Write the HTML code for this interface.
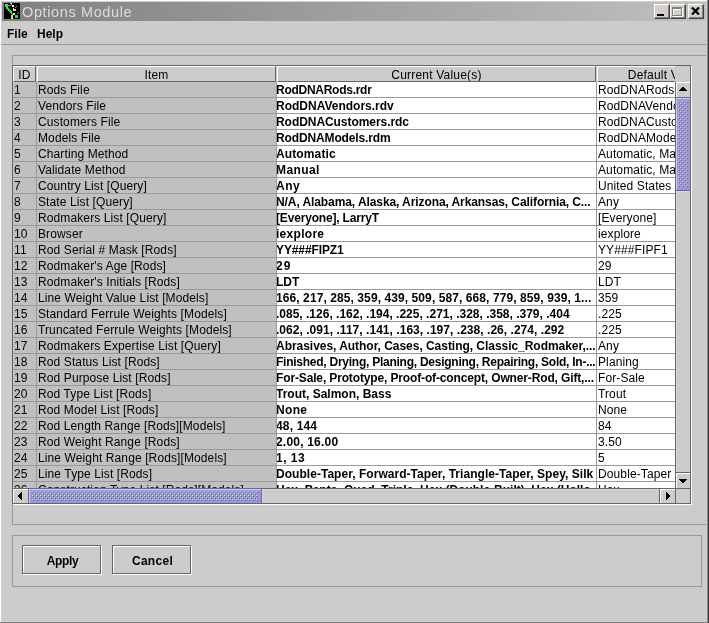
<!DOCTYPE html>
<html><head><meta charset="utf-8">
<style>
*{box-sizing:border-box;margin:0;padding:0}
html,body{width:709px;height:623px;overflow:hidden;background:#cccccc;font-family:"Liberation Sans",sans-serif;font-size:12px;color:#000}
.a{position:absolute}
#title{will-change:transform;left:2px;top:2px;width:704px;height:19px;background:linear-gradient(to right,#808080,#c0c0c0)}
#title .t{position:absolute;left:20px;top:1px;font-size:14.5px;letter-spacing:0.62px;line-height:19px;color:#dcdcd8;white-space:nowrap}
.wb{position:absolute;top:4px;width:16px;height:15px;background:#d4d0c8;border-top:1px solid #fff;border-left:1px solid #fff;border-right:1px solid #404040;border-bottom:1px solid #404040;box-shadow:inset -1px -1px 0 #808080}
.menu{will-change:transform;position:absolute;top:22px;font-weight:bold;font-size:12px;line-height:24px}
.hl{position:absolute;height:1px}
.vl{position:absolute;width:1px}
#hdr{will-change:transform;left:13px;top:66px;width:662px;height:16px;overflow:hidden}
.h{position:absolute;top:0;height:16px;border-top:1px solid #fff;border-left:1px solid #fff;border-right:1px solid #666;border-bottom:1px solid #666;text-align:center;line-height:16px;letter-spacing:0.2px;white-space:nowrap;overflow:hidden}
#body{will-change:transform;left:13px;top:82px;width:662px;height:406px;overflow:hidden;background:#fff}
.r{position:absolute;left:0;width:900px;height:16px}
.c span{position:relative;top:1px}
.c{position:absolute;top:0;height:16px;border-right:1px solid #999;border-bottom:1px solid #999;white-space:nowrap;overflow:hidden;line-height:15px}
.c0{left:0;width:24px;background:#c0c0c0;padding-left:1px;letter-spacing:0.11px}
.c1{left:24px;width:240px;background:#c0c0c0;padding-left:1px;letter-spacing:0.11px}
.c2{left:264px;width:320px;background:#fff;font-weight:bold;text-indent:-1px}
.c3{left:584px;width:320px;background:#fff;padding-left:1px;letter-spacing:0.11px}
.btn{will-change:transform;position:absolute;top:545px;width:79px;height:29px;border:1px solid #666;box-shadow:1px 1px 0 #fff, inset 1px 1px 0 #fff;font-weight:bold;text-align:center;line-height:31px;padding-left:2px}
</style></head><body>
<!-- window frame -->
<div class="a" style="left:0;top:0;width:709px;height:1px;background:#fff"></div>
<div class="a" style="left:0;top:0;width:1px;height:623px;background:#fff"></div>
<div class="a" style="left:1px;top:1px;width:706px;height:1px;background:#d4d0c8"></div>
<div class="a" style="left:1px;top:1px;width:1px;height:621px;background:#d4d0c8"></div>
<div class="a" style="left:706px;top:1px;width:1px;height:621px;background:#d4d0c8"></div>
<div class="a" style="left:707px;top:0;width:1px;height:623px;background:#808080"></div>
<div class="a" style="left:708px;top:0;width:1px;height:623px;background:#404040"></div>
<div class="a" style="left:1px;top:621px;width:706px;height:1px;background:#d4d0c8"></div>
<div class="a" style="left:0;top:622px;width:708px;height:1px;background:#808080"></div>

<div id="title" class="a">
  <svg class="a" style="left:2px;top:1px" width="16" height="16" viewBox="0 0 16 16" shape-rendering="crispEdges">
    <rect width="16" height="16" fill="#000"/>
    <rect x="1" y="1" width="3" height="3" fill="#33dd55"/>
    <rect x="2" y="0" width="1" height="1" fill="#116622"/><rect x="0" y="2" width="1" height="1" fill="#116622"/>
    <rect x="4" y="2" width="3" height="1" fill="#55aabb"/>
    <rect x="2" y="4" width="2" height="2" fill="#44ee66"/>
    <rect x="3" y="5" width="2" height="2" fill="#22cc33"/>
    <rect x="4" y="6" width="2" height="2" fill="#33dd44"/>
    <rect x="5" y="7" width="2" height="2" fill="#22cc33"/>
    <rect x="6" y="8" width="2" height="2" fill="#33dd44"/>
    <rect x="7" y="9" width="1" height="2" fill="#55ee66"/>
    <rect x="6" y="0" width="2" height="1" fill="#eedd88"/>
    <rect x="7" y="1" width="1" height="1" fill="#ccbb66"/>
    <rect x="8" y="2" width="2" height="2" fill="#ffffdd"/>
    <rect x="11" y="4" width="1" height="1" fill="#6699aa"/>
    <rect x="12" y="3" width="1" height="1" fill="#6699aa"/>
    <rect x="9" y="5" width="1" height="3" fill="#eedd77"/>
    <rect x="9" y="6" width="3" height="2" fill="#eedd77"/>
    <rect x="9" y="10" width="2" height="2" fill="#ffffdd"/>
    <rect x="13" y="10" width="1" height="1" fill="#6699aa"/>
    <rect x="14" y="9" width="1" height="1" fill="#6699aa"/>
    <rect x="7" y="12" width="2" height="4" fill="#eedd88"/>
    <rect x="8" y="11" width="1" height="1" fill="#ccbb66"/>
    <rect x="11" y="12" width="3" height="3" fill="#33dd44"/>
    <rect x="10" y="11" width="1" height="1" fill="#55ee66"/>
  </svg>
  <div class="t">Options Module</div>
</div>
<div class="wb" style="left:654px"><div class="a" style="left:2px;top:9px;width:7px;height:2px;background:#000"></div></div>
<div class="wb" style="left:670px"><div class="a" style="left:1px;top:2px;width:10px;height:9px;border:1px solid #808080;border-top-width:2px;box-shadow:1px 1px 0 #fff, inset 1px 1px 0 #fff"></div></div>
<div class="wb" style="left:688px"><svg class="a" style="left:2px;top:2px" width="9" height="8" viewBox="0 0 9 8"><path d="M1 0.5 L8 7.5 M8 0.5 L1 7.5" stroke="#000" stroke-width="2.3"/></svg></div>

<div class="menu" style="left:7px">File</div>
<div class="menu" style="left:37px">Help</div>
<div class="hl" style="left:2px;top:44px;width:704px;background:#999"></div>

<!-- outer panel lines -->
<div class="hl" style="left:12px;top:55px;width:694px;background:#999"></div>
<div class="vl" style="left:12px;top:55px;height:470px;background:#999"></div>
<div class="hl" style="left:12px;top:524px;width:694px;background:#999"></div>

<!-- scroll pane border -->
<div class="a" style="left:12px;top:65px;width:679px;height:439px;border:1px solid #666"></div>
<div class="vl" style="left:691px;top:66px;height:439px;background:#fff"></div>
<div class="hl" style="left:13px;top:504px;width:679px;background:#fff"></div>

<div id="hdr" class="a">
  <div class="h" style="left:0;width:23px">ID</div>
  <div class="h" style="left:24px;width:239px">Item</div>
  <div class="h" style="left:264px;width:319px">Current Value(s)</div>
  <div class="h" style="left:584px;width:150px">Default Value(s)</div>
</div>

<div id="body" class="a">
<div class="r" style="top:0px"><div class="c c0"><span>1</span></div><div class="c c1"><span>Rods File</span></div><div class="c c2"><span style="letter-spacing:-0.269px">RodDNARods.rdr</span></div><div class="c c3"><span>RodDNARods.rdr</span></div></div><div class="r" style="top:16px"><div class="c c0"><span>2</span></div><div class="c c1"><span>Vendors File</span></div><div class="c c2"><span style="letter-spacing:0.0px">RodDNAVendors.rdv</span></div><div class="c c3"><span>RodDNAVendors.rdv</span></div></div><div class="r" style="top:32px"><div class="c c0"><span>3</span></div><div class="c c1"><span>Customers File</span></div><div class="c c2"><span style="letter-spacing:-0.056px">RodDNACustomers.rdc</span></div><div class="c c3"><span>RodDNACustomers.rdc</span></div></div><div class="r" style="top:48px"><div class="c c0"><span>4</span></div><div class="c c1"><span>Models File</span></div><div class="c c2"><span style="letter-spacing:-0.133px">RodDNAModels.rdm</span></div><div class="c c3"><span>RodDNAModels.rdm</span></div></div><div class="r" style="top:64px"><div class="c c0"><span>5</span></div><div class="c c1"><span>Charting Method</span></div><div class="c c2"><span style="letter-spacing:0.125px">Automatic</span></div><div class="c c3"><span>Automatic, Manual</span></div></div><div class="r" style="top:80px"><div class="c c0"><span>6</span></div><div class="c c1"><span>Validate Method</span></div><div class="c c2"><span style="letter-spacing:0.4px">Manual</span></div><div class="c c3"><span>Automatic, Manual</span></div></div><div class="r" style="top:96px"><div class="c c0"><span>7</span></div><div class="c c1"><span>Country List [Query]</span></div><div class="c c2"><span style="letter-spacing:0.5px">Any</span></div><div class="c c3"><span>United States</span></div></div><div class="r" style="top:112px"><div class="c c0"><span>8</span></div><div class="c c1"><span>State List [Query]</span></div><div class="c c2"><span style="letter-spacing:-0.089px">N/A, Alabama, Alaska, Arizona, Arkansas, California, C...</span></div><div class="c c3"><span>Any</span></div></div><div class="r" style="top:128px"><div class="c c0"><span>9</span></div><div class="c c1"><span>Rodmakers List [Query]</span></div><div class="c c2"><span style="letter-spacing:-0.176px">[Everyone], LarryT</span></div><div class="c c3"><span>[Everyone]</span></div></div><div class="r" style="top:144px"><div class="c c0"><span>10</span></div><div class="c c1"><span>Browser</span></div><div class="c c2"><span style="letter-spacing:0.286px">iexplore</span></div><div class="c c3"><span>iexplore</span></div></div><div class="r" style="top:160px"><div class="c c0"><span>11</span></div><div class="c c1"><span>Rod Serial # Mask [Rods]</span></div><div class="c c2"><span style="letter-spacing:-0.111px">YY###FIPZ1</span></div><div class="c c3"><span>YY###FIPF1</span></div></div><div class="r" style="top:176px"><div class="c c0"><span>12</span></div><div class="c c1"><span>Rodmaker's Age [Rods]</span></div><div class="c c2"><span style="letter-spacing:1.0px">29</span></div><div class="c c3"><span>29</span></div></div><div class="r" style="top:192px"><div class="c c0"><span>13</span></div><div class="c c1"><span>Rodmaker's Initials [Rods]</span></div><div class="c c2"><span style="letter-spacing:0.0px">LDT</span></div><div class="c c3"><span>LDT</span></div></div><div class="r" style="top:208px"><div class="c c0"><span>14</span></div><div class="c c1"><span>Line Weight Value List [Models]</span></div><div class="c c2"><span style="letter-spacing:0.086px">166, 217, 285, 359, 439, 509, 587, 668, 779, 859, 939, 1...</span></div><div class="c c3"><span>359</span></div></div><div class="r" style="top:224px"><div class="c c0"><span>15</span></div><div class="c c1"><span>Standard Ferrule Weights [Models]</span></div><div class="c c2"><span style="letter-spacing:0.0px">.085, .126, .162, .194, .225, .271, .328, .358, .379, .404</span></div><div class="c c3"><span>.225</span></div></div><div class="r" style="top:240px"><div class="c c0"><span>16</span></div><div class="c c1"><span>Truncated Ferrule Weights [Models]</span></div><div class="c c2"><span style="letter-spacing:0.036px">.062, .091, .117, .141, .163, .197, .238, .26, .274, .292</span></div><div class="c c3"><span>.225</span></div></div><div class="r" style="top:256px"><div class="c c0"><span>17</span></div><div class="c c1"><span>Rodmakers Expertise List [Query]</span></div><div class="c c2"><span style="letter-spacing:-0.037px">Abrasives, Author, Cases, Casting, Classic_Rodmaker,...</span></div><div class="c c3"><span>Any</span></div></div><div class="r" style="top:272px"><div class="c c0"><span>18</span></div><div class="c c1"><span>Rod Status List [Rods]</span></div><div class="c c2"><span style="letter-spacing:-0.25px">Finished, Drying, Planing, Designing, Repairing, Sold, In-...</span></div><div class="c c3"><span>Planing</span></div></div><div class="r" style="top:288px"><div class="c c0"><span>19</span></div><div class="c c1"><span>Rod Purpose List [Rods]</span></div><div class="c c2"><span style="letter-spacing:-0.14px">For-Sale, Prototype, Proof-of-concept, Owner-Rod, Gift,...</span></div><div class="c c3"><span>For-Sale</span></div></div><div class="r" style="top:304px"><div class="c c0"><span>20</span></div><div class="c c1"><span>Rod Type List [Rods]</span></div><div class="c c2"><span style="letter-spacing:0.0px">Trout, Salmon, Bass</span></div><div class="c c3"><span>Trout</span></div></div><div class="r" style="top:320px"><div class="c c0"><span>21</span></div><div class="c c1"><span>Rod Model List [Rods]</span></div><div class="c c2"><span style="letter-spacing:0.333px">None</span></div><div class="c c3"><span>None</span></div></div><div class="r" style="top:336px"><div class="c c0"><span>22</span></div><div class="c c1"><span>Rod Length Range [Rods][Models]</span></div><div class="c c2"><span style="letter-spacing:0.167px">48, 144</span></div><div class="c c3"><span>84</span></div></div><div class="r" style="top:352px"><div class="c c0"><span>23</span></div><div class="c c1"><span>Rod Weight Range [Rods]</span></div><div class="c c2"><span style="letter-spacing:0.2px">2.00, 16.00</span></div><div class="c c3"><span>3.50</span></div></div><div class="r" style="top:368px"><div class="c c0"><span>24</span></div><div class="c c1"><span>Line Weight Range [Rods][Models]</span></div><div class="c c2"><span style="letter-spacing:0.5px">1, 13</span></div><div class="c c3"><span>5</span></div></div><div class="r" style="top:384px"><div class="c c0"><span>25</span></div><div class="c c1"><span>Line Type List [Rods]</span></div><div class="c c2"><span style="letter-spacing:0.037px">Double-Taper, Forward-Taper, Triangle-Taper, Spey, Silk</span></div><div class="c c3"><span>Double-Taper</span></div></div><div class="r" style="top:400px"><div class="c c0"><span>26</span></div><div class="c c1"><span>Construction Type List [Rods][Models]</span></div><div class="c c2"><span style="letter-spacing:0px">Hex, Penta, Quad, Triple, Hex (Double-Built), Hex (Hollo...</span></div><div class="c c3"><span>Hex</span></div></div>
</div>

<!-- scrollbars (absolute coords) -->
<svg class="a" style="left:0;top:0" width="709" height="623" shape-rendering="crispEdges">
  <defs><pattern id="bv" x="678" y="101" width="4" height="4" patternUnits="userSpaceOnUse"><rect x="0" y="0" width="1" height="1" fill="#ccccff"/><rect x="1" y="1" width="1" height="1" fill="#666699"/><rect x="2" y="2" width="1" height="1" fill="#ccccff"/><rect x="3" y="3" width="1" height="1" fill="#666699"/></pattern><pattern id="bh" x="32" y="491" width="4" height="4" patternUnits="userSpaceOnUse"><rect x="0" y="0" width="1" height="1" fill="#ccccff"/><rect x="1" y="1" width="1" height="1" fill="#666699"/><rect x="2" y="2" width="1" height="1" fill="#ccccff"/><rect x="3" y="3" width="1" height="1" fill="#666699"/></pattern></defs>
  <!-- vertical track bg -->
  <rect x="676" y="82" width="14" height="406" fill="#cccccc"/>
  <rect x="675" y="82" width="1" height="422" fill="#666666"/>
  <!-- up button -->
  <rect x="676" y="82" width="14" height="1" fill="#ffffff"/>
  <rect x="676" y="82" width="1" height="15" fill="#ffffff"/>
  <rect x="682" y="87" width="2" height="1" fill="#000"/>
  <rect x="681" y="88" width="4" height="1" fill="#000"/>
  <rect x="680" y="89" width="6" height="1" fill="#000"/>
  <rect x="679" y="90" width="8" height="1" fill="#000"/>
  <!-- vthumb -->
  <rect x="675" y="97" width="15" height="94" fill="#666699"/>
  <rect x="676" y="98" width="14" height="92" fill="#ccccff"/>
  <rect x="677" y="99" width="13" height="91" fill="#9999cc"/>
  <rect x="678" y="101" width="10" height="86" fill="url(#bv)"/>
  <!-- track highlight -->
  <rect x="676" y="191" width="14" height="1" fill="#dadada"/>
  <rect x="676" y="191" width="1" height="281" fill="#dadada"/>
  <!-- down button -->
  <rect x="675" y="472" width="15" height="1" fill="#666666"/>
  <rect x="676" y="473" width="14" height="1" fill="#ffffff"/>
  <rect x="676" y="473" width="1" height="15" fill="#ffffff"/>
  <rect x="679" y="479" width="8" height="1" fill="#000"/>
  <rect x="680" y="480" width="6" height="1" fill="#000"/>
  <rect x="681" y="481" width="4" height="1" fill="#000"/>
  <rect x="682" y="482" width="2" height="1" fill="#000"/>

  <!-- horizontal scrollbar -->
  <rect x="13" y="489" width="677" height="14" fill="#cccccc"/>
  <rect x="13" y="488" width="677" height="1" fill="#666666"/>
  <!-- left button -->
  <rect x="13" y="489" width="15" height="1" fill="#ffffff"/>
  <rect x="13" y="489" width="1" height="14" fill="#ffffff"/>
  <rect x="18" y="495" width="1" height="2" fill="#000"/>
  <rect x="19" y="494" width="1" height="4" fill="#000"/>
  <rect x="20" y="493" width="1" height="6" fill="#000"/>
  <rect x="21" y="492" width="1" height="8" fill="#000"/>
  <!-- hthumb -->
  <rect x="28" y="488" width="234" height="15" fill="#666699"/>
  <rect x="29" y="489" width="232" height="14" fill="#ccccff"/>
  <rect x="30" y="490" width="231" height="13" fill="#9999cc"/>
  <rect x="32" y="491" width="226" height="10" fill="url(#bh)"/>
  <rect x="262" y="489" width="397" height="1" fill="#dadada"/>
  <rect x="262" y="489" width="1" height="14" fill="#dadada"/>
  <!-- right button -->
  <rect x="659" y="489" width="1" height="14" fill="#666666"/>
  <rect x="660" y="489" width="15" height="1" fill="#ffffff"/>
  <rect x="660" y="489" width="1" height="14" fill="#ffffff"/>
  <rect x="666" y="492" width="1" height="8" fill="#000"/>
  <rect x="667" y="493" width="1" height="6" fill="#000"/>
  <rect x="668" y="494" width="1" height="4" fill="#000"/>
  <rect x="669" y="495" width="1" height="2" fill="#000"/>
  <!-- corner -->
  <rect x="676" y="489" width="14" height="14" fill="#cccccc"/>
  <rect x="675" y="488" width="1" height="16" fill="#666666"/>
  <!-- pane border (redraw on top) -->
  <rect x="690" y="65" width="1" height="439" fill="#666666"/>
  <rect x="12" y="503" width="679" height="1" fill="#666666"/>
</svg>

<!-- button panel -->
<div class="a" style="left:12px;top:535px;width:690px;height:52px;border:1px solid #999"></div>
<div class="btn" style="left:22px;letter-spacing:-0.4px">Apply</div>
<div class="btn" style="left:112px;letter-spacing:0.3px">Cancel</div>
</body></html>
